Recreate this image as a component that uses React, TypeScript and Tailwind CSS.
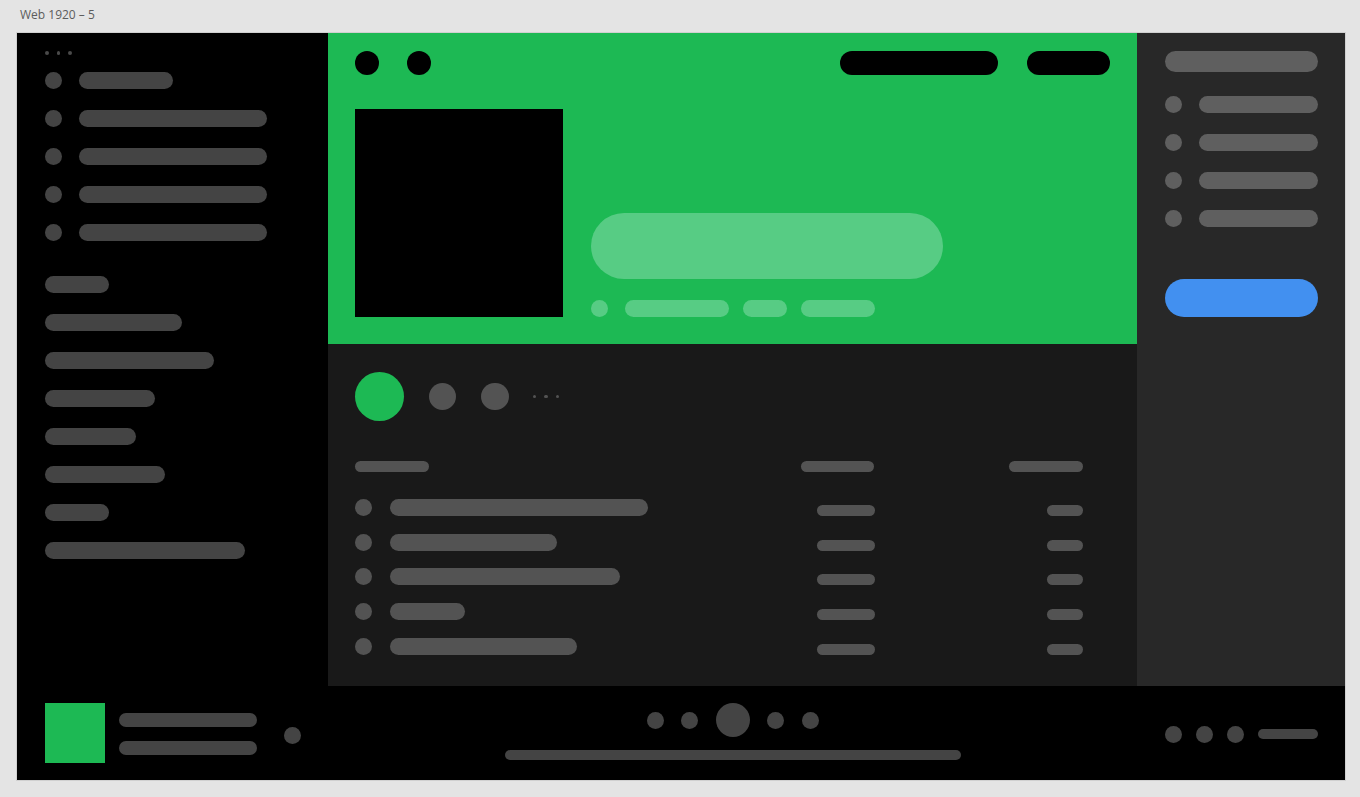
import React from "react";

const Dot = ({ c = "bg-[#444444]" }: { c?: string }) => (
  <div className={`h-[17px] w-[17px] shrink-0 rounded-full ${c}`} />
);

const Bar = ({ w, c = "bg-[#444444]", h = "h-[17px]" }: { w: number; c?: string; h?: string }) => (
  <div className={`${h} shrink-0 rounded-full ${c}`} style={{ width: w }} />
);

export default function App() {
  const menu = [94, 188, 188, 188, 188];
  const lib = [64, 137, 169, 110, 91, 120, 64, 200];
  const rows = [258, 167, 230, 75, 187];
  return (
    <div className="w-[1360px] h-[797px] bg-[#e4e4e4] overflow-hidden" style={{ fontFamily: '"Open Sans", "Liberation Sans", sans-serif' }}>
      <div className="h-[33px] pl-[20px] pt-[6px] text-[12px] leading-[18px] text-[#5c5c5c]">Web 1920 – 5</div>
      <div className="ml-[17px] w-[1328px] h-[747px] grid grid-rows-[653px_94px] shadow-[0_0_0_1px_#d0d0d0]">
        {/* top area */}
        <div className="flex h-[653px]">
          {/* left sidebar */}
          <div className="w-[311px] shrink-0 bg-black pl-[28px] pt-[18px] flex flex-col">
            <div className="flex gap-[8px] h-[3.5px]">
              <div className="w-[3.5px] h-[3.5px] rounded-full bg-[#4a4a4a]" />
              <div className="w-[3.5px] h-[3.5px] rounded-full bg-[#4a4a4a]" />
              <div className="w-[3.5px] h-[3.5px] rounded-full bg-[#4a4a4a]" />
            </div>
            <div className="mt-[17px] flex flex-col gap-[21px]">
              {menu.map((w, i) => (
                <div key={i} className="flex items-center gap-[17px]">
                  <Dot />
                  <Bar w={w} />
                </div>
              ))}
            </div>
            <div className="mt-[35.5px] flex flex-col gap-[21px]">
              {lib.map((w, i) => (
                <Bar key={i} w={w} />
              ))}
            </div>
          </div>
          {/* main */}
          <div className="w-[809px] shrink-0 flex flex-col">
            <div className="h-[311px] bg-[#1db954] px-[27px] pt-[18px]">
              <div className="flex items-center h-[24px]">
                <div className="w-[24px] h-[24px] rounded-full bg-black" />
                <div className="ml-[28px] w-[24px] h-[24px] rounded-full bg-black" />
                <div className="ml-auto w-[158px] h-[24px] rounded-full bg-black" />
                <div className="ml-[29px] w-[83px] h-[24px] rounded-full bg-black" />
              </div>
              <div className="mt-[34px] flex items-end gap-[28px]">
                <div className="w-[208px] h-[208px] bg-black shrink-0" />
                <div className="flex flex-col gap-[21px]">
                  <div className="w-[352px] h-[66px] rounded-full bg-[#57cc84]" />
                  <div className="flex items-center">
                    <div className="w-[17px] h-[17px] rounded-full bg-[#57cc84]" />
                    <div className="ml-[17px] w-[104px] h-[17px] rounded-full bg-[#57cc84]" />
                    <div className="ml-[14px] w-[44px] h-[17px] rounded-full bg-[#57cc84]" />
                    <div className="ml-[14px] w-[74px] h-[17px] rounded-full bg-[#57cc84]" />
                  </div>
                </div>
              </div>
            </div>
            <div className="flex-1 bg-[#191919] pl-[27px] pr-[54px] pt-[28px]">
              <div className="flex items-center h-[49px]">
                <div className="w-[49px] h-[49px] rounded-full bg-[#1db954]" />
                <div className="ml-[24.5px] w-[27.5px] h-[27.5px] rounded-full bg-[#535353]" />
                <div className="ml-[25px] w-[27.5px] h-[27.5px] rounded-full bg-[#535353]" />
                <div className="ml-[24px] flex gap-[8px]">
                  <div className="w-[3.5px] h-[3.5px] rounded-full bg-[#535353]" />
                  <div className="w-[3.5px] h-[3.5px] rounded-full bg-[#535353]" />
                  <div className="w-[3.5px] h-[3.5px] rounded-full bg-[#535353]" />
                </div>
              </div>
              <div className="mt-[40px] grid grid-cols-[1fr_74px_208px] items-center h-[11px]">
                <div className="w-[74px] h-[11px] rounded-full bg-[#535353]" />
                <div className="w-[73px] h-[11px] rounded-full bg-[#535353]" />
                <div className="justify-self-end w-[74px] h-[11px] rounded-full bg-[#535353]" />
              </div>
              <div className="mt-[27px] flex flex-col gap-[17.7px]">
                {rows.map((w, i) => (
                  <div key={i} className="grid grid-cols-[1fr_74px_208px] items-end h-[17px]">
                    <div className="flex items-center gap-[18px]">
                      <Dot c="bg-[#535353]" />
                      <Bar w={w} c="bg-[#535353]" />
                    </div>
                    <div className="justify-self-end w-[58px] h-[11px] rounded-full bg-[#535353]" />
                    <div className="justify-self-end w-[36px] h-[11px] rounded-full bg-[#535353]" />
                  </div>
                ))}
              </div>
            </div>
          </div>
          {/* right panel */}
          <div className="w-[208px] shrink-0 bg-[#282828] pl-[28px] pr-[27px] pt-[18px] flex flex-col">
            <div className="h-[20.5px] w-full rounded-full bg-[#5f5f5f]" />
            <div className="mt-[24px] flex flex-col gap-[21px]">
              {[0, 1, 2, 3].map((i) => (
                <div key={i} className="flex items-center gap-[17px]">
                  <Dot c="bg-[#5f5f5f]" />
                  <div className="flex-1 h-[17px] rounded-full bg-[#5f5f5f]" />
                </div>
              ))}
            </div>
            <div className="mt-[52px] h-[38px] w-full rounded-full bg-[#4290f0]" />
          </div>
        </div>
        {/* bottom player bar */}
        <div className="flex bg-black h-[94px]">
          <div className="w-[311px] shrink-0 pl-[28px] pt-[17px] flex items-start">
            <div className="w-[60px] h-[60px] bg-[#1db954]" />
            <div className="ml-[14px] pt-[10px] flex flex-col gap-[14px]">
              <Bar w={138} h="h-[14px]" />
              <Bar w={138} h="h-[14px]" />
            </div>
            <div className="ml-[27px] mt-[24px]">
              <Dot />
            </div>
          </div>
          <div className="w-[809px] shrink-0 pt-[17px] flex flex-col items-center">
            <div className="flex items-center gap-[17.5px] h-[34px]">
              <Dot />
              <Dot />
              <div className="w-[34px] h-[34px] rounded-full bg-[#444444]" />
              <Dot />
              <Dot />
            </div>
            <div className="mt-[13px] w-[456px] h-[10px] rounded-full bg-[#444444]" />
          </div>
          <div className="w-[208px] shrink-0 pl-[28px] pr-[27px] pt-[2px] flex items-center h-[94px] gap-[14px]">
            <Dot />
            <Dot />
            <Dot />
            <div className="w-[60px] h-[10px] rounded-full bg-[#444444]" />
          </div>
        </div>
      </div>
    </div>
  );
}
